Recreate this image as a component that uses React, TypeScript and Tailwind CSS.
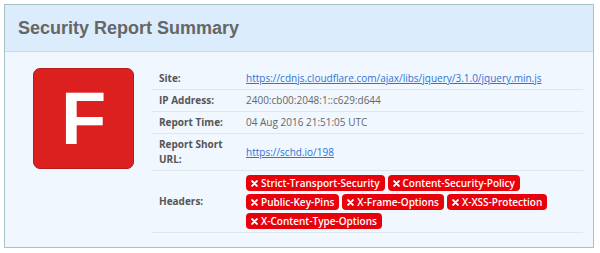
const HEADERS = [
  "Strict-Transport-Security",
  "Content-Security-Policy",
  "Public-Key-Pins",
  "X-Frame-Options",
  "X-XSS-Protection",
  "X-Content-Type-Options",
];

function Cross() {
  return (
    <svg width="7" height="7" viewBox="0 0 8 8" className="mr-[3px] flex-none">
      <path d="M1.3 1.3 L6.7 6.7 M6.7 1.3 L1.3 6.7" stroke="white" strokeWidth="2.3" strokeLinecap="round" />
    </svg>
  );
}

function Row({ label, children }: { label: React.ReactNode; children: React.ReactNode }) {
  return (
    <div className="flex items-center border-b border-[#dfe6ec]">
      <div className="w-[86px] flex-none py-[3px] pl-[7px] pr-1 font-bold leading-[15px] text-[#555]">{label}</div>
      <div className="min-w-0 flex-1 py-[3px] pl-[8px] leading-[15px] text-[#666]">{children}</div>
    </div>
  );
}

export default function App() {
  return (
    <div className="h-[253px] w-[600px] bg-white pt-[4px] pl-[4px]">
      <div className="h-[244px] w-[590px] border-[1.5px] border-[#a7c2c2] bg-[#f0f7fe]">
        <div className="flex h-[47px] items-center border-b border-[#c6dcec] bg-[#dbedfd] pl-[13px]">
          <h1 className="font-['Liberation_Sans',Arial,sans-serif] text-[18px] font-bold text-[#666]">
            Security Report Summary
          </h1>
        </div>
        <div className="flex pt-[16px] pl-[28px] pr-[10px]">
          <div className="flex h-[101px] w-[101px] flex-none items-center justify-center rounded-[7px] border border-[#b8191a] bg-[#dc1f1f]">
            <span className="font-['Liberation_Sans',Arial,sans-serif] text-[74px] leading-none font-bold text-white">F</span>
          </div>
          <div className="ml-[18px] flex-1 font-['Open_Sans',sans-serif] text-[10px]">
            <Row label="Site:">
              <a href="#" className="text-[#2f73d8] underline">
                https://cdnjs.cloudflare.com/ajax/libs/jquery/3.1.0/jquery.min.js
              </a>
            </Row>
            <Row label="IP Address:">2400:cb00:2048:1::c629:d644</Row>
            <Row label="Report Time:">04 Aug 2016 21:51:05 UTC</Row>
            <Row label={<>Report Short<br />URL:</>}>
              <a href="#" className="text-[#2f73d8] underline">https://schd.io/198</a>
            </Row>
            <div className="flex items-center border-b border-[#dfe6ec]">
              <div className="w-[86px] flex-none pl-[7px] font-bold text-[#555]">Headers:</div>
              <div className="flex flex-1 flex-wrap gap-[3px] pt-[4px] pb-[3px] pl-[8px]">
                {HEADERS.map((h) => (
                  <span
                    key={h}
                    className="flex h-[16px] items-center rounded-[4px] bg-[#e8000b] px-[5px] text-[10px] font-semibold leading-[16px] text-white"
                  >
                    <Cross />
                    {h}
                  </span>
                ))}
              </div>
            </div>
          </div>
        </div>
      </div>
    </div>
  );
}
